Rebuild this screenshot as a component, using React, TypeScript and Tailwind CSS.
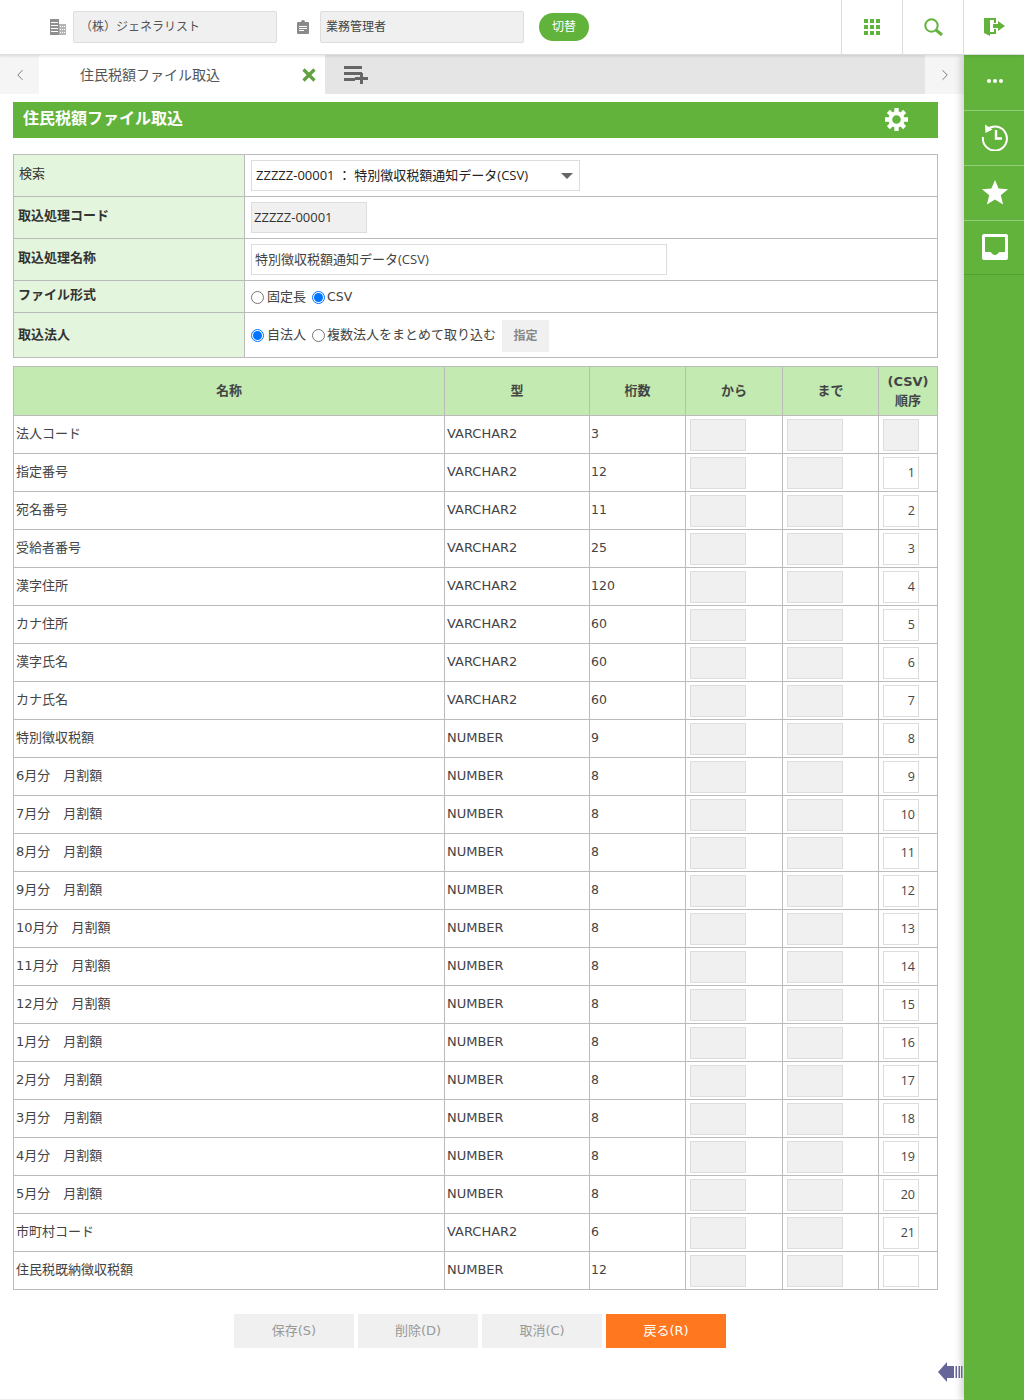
import { ChevronLeft, ChevronRight } from "lucide-react";

const FONT = "font-['Open_Sans','Noto_Sans_CJK_JP',sans-serif]";
const WIDE = "font-['DejaVu_Sans','Noto_Sans_CJK_JP',sans-serif]";

type Row = { name: string; type: string; digits: number; order?: number; locked?: boolean };

const V = "VARCHAR2";
const N = "NUMBER";

const rows: Row[] = [
  { name: "法人コード", type: V, digits: 3, locked: true },
  { name: "指定番号", type: V, digits: 12, order: 1 },
  { name: "宛名番号", type: V, digits: 11, order: 2 },
  { name: "受給者番号", type: V, digits: 25, order: 3 },
  { name: "漢字住所", type: V, digits: 120, order: 4 },
  { name: "カナ住所", type: V, digits: 60, order: 5 },
  { name: "漢字氏名", type: V, digits: 60, order: 6 },
  { name: "カナ氏名", type: V, digits: 60, order: 7 },
  { name: "特別徴収税額", type: N, digits: 9, order: 8 },
  { name: "6月分　月割額", type: N, digits: 8, order: 9 },
  { name: "7月分　月割額", type: N, digits: 8, order: 10 },
  { name: "8月分　月割額", type: N, digits: 8, order: 11 },
  { name: "9月分　月割額", type: N, digits: 8, order: 12 },
  { name: "10月分　月割額", type: N, digits: 8, order: 13 },
  { name: "11月分　月割額", type: N, digits: 8, order: 14 },
  { name: "12月分　月割額", type: N, digits: 8, order: 15 },
  { name: "1月分　月割額", type: N, digits: 8, order: 16 },
  { name: "2月分　月割額", type: N, digits: 8, order: 17 },
  { name: "3月分　月割額", type: N, digits: 8, order: 18 },
  { name: "4月分　月割額", type: N, digits: 8, order: 19 },
  { name: "5月分　月割額", type: N, digits: 8, order: 20 },
  { name: "市町村コード", type: V, digits: 6, order: 21 },
  { name: "住民税既納徴収税額", type: N, digits: 12 },
];

function Radio({ checked }: { checked?: boolean }) {
  return (
    <span className={`flex h-[13px] w-[13px] shrink-0 items-center justify-center rounded-full border bg-white ${checked ? "border-[#0075ff]" : "border-[#767676]"}`}>
      {checked && <span className="h-[9px] w-[9px] rounded-full bg-[#0075ff]" />}
    </span>
  );
}

function FormRow({ label, bold, h, pad = "pb-[4px]", children }: { label: string; bold?: boolean; h: string; pad?: string; children: React.ReactNode }) {
  return (
    <tr className={h}>
      <th className={`w-[231px] border border-[#bbbbbb] bg-[#e3f5dc] px-[4px] text-left align-middle text-[13px] text-[#333] ${pad} ${bold ? "font-bold" : "pl-[5px] font-normal"}`}>
        {label}
      </th>
      <td className="border border-[#bbbbbb] pl-[6px] align-middle text-[13px] text-[#444]">{children}</td>
    </tr>
  );
}

function Header() {
  return (
    <header className="relative z-20 flex h-[55px] items-center border-b border-[#dddddd] bg-white shadow-[0_1px_3px_rgba(0,0,0,0.12)]">
      <svg viewBox="0 0 16 16" className="ml-[50px] h-[16px] w-[16px]">
        <path fill="#8f8f8f" d="M0 0h9v16H0z" />
        <path fill="#fff" d="M1 3h7v1H1zM1 6h7v1H1zM1 9h7v1H1zM1 12h7v1H1z" />
        <path fill="#b5b5b5" d="M9 5h7v11H9z" />
        <path fill="#fff" d="M10 7h1v1h-1zM12 7h1v1h-1zM14 7h1v1h-1zM10 10h1v1h-1zM12 10h1v1h-1zM14 10h1v1h-1zM10 13h1v1h-1zM12 13h1v1h-1zM14 13h1v1h-1z" />
      </svg>
      <div className="ml-[7px] flex h-[32px] w-[204px] items-center rounded-[2px] border border-[#dddddd] bg-[#f0f0f0] pl-[6px] text-[12px] text-[#555]">（株）ジェネラリスト</div>
      <svg viewBox="0 0 12 14" className="ml-[20px] h-[14px] w-[12px]">
        <path fill="#8a8a8a" d="M1 2h3a2 2 0 0 1 4 0h3a1 1 0 0 1 1 1v10a1 1 0 0 1-1 1H1a1 1 0 0 1-1-1V3a1 1 0 0 1 1-1z" />
        <path fill="#fff" d="M2 6h8v1H2zM2 8h8v1H2zM2 10h5v1H2z" />
      </svg>
      <div className="ml-[11px] flex h-[32px] w-[204px] items-center rounded-[2px] border border-[#dddddd] bg-[#f0f0f0] pl-[5px] text-[12px] text-[#444]">業務管理者</div>
      <button className="ml-[15px] h-[28px] w-[50px] rounded-full bg-[#62b33c] text-[12px] text-white">切替</button>
      <div className="ml-auto flex h-full">
        <div className="flex h-full w-[61px] items-center justify-center border-l border-[#dddddd]">
          <svg viewBox="0 0 16 16" className="h-[16px] w-[16px]" fill="#62b33c">
            <path d="M0 0h4v4H0zM6 0h4v4H6zM12 0h4v4h-4zM0 6h4v4H0zM6 6h4v4H6zM12 6h4v4h-4zM0 12h4v4H0zM6 12h4v4H6zM12 12h4v4h-4z" />
          </svg>
        </div>
        <div className="flex h-full w-[61px] items-center justify-center border-l border-[#dddddd]">
          <svg viewBox="0 0 19 18" className="h-[18px] w-[19px]" fill="none" stroke="#62b33c">
            <circle cx="7.500" cy="7.500" r="6.200" strokeWidth="2" />
            <path d="M12 12l6 5" strokeWidth="3" />
          </svg>
        </div>
        <div className="flex h-full w-[61px] items-center justify-center border-l border-[#dddddd]">
          <svg viewBox="0 0 21 18" className="h-[18px] w-[21px]" fill="#62b33c">
            <path d="M0 0h12v5h-2V2H6v12h4v-3h2v5H6v2l-6-3z" />
            <path d="M9 6h5V3l7 5-7 5v-3H9z" />
          </svg>
        </div>
      </div>
    </header>
  );
}

function TabBar() {
  return (
    <div className="flex h-[39px]">
      <div className="flex w-[39px] items-center justify-center bg-[#f5f5f5] pl-px">
        <ChevronLeft className="h-[18px] w-[18px] text-[#777]" strokeWidth={1.3} />
      </div>
      <div className="flex w-[286px] items-center bg-white pl-[41px] text-[14px] text-[#555]">
        住民税額ファイル取込
        <svg viewBox="0 0 14 14" className="ml-auto mr-[9px] h-[14px] w-[14px]">
          <path d="M1.500 1.500l11 11M12.500 1.500l-11 11" stroke="#62a044" strokeWidth="3.200" />
        </svg>
      </div>
      <div className="flex flex-1 items-center bg-[#e5e5e5] pl-[19px]">
        <svg viewBox="0 0 24 18" className="h-[18px] w-[24px]" fill="#666">
          <path d="M0 0h18v3H0zM0 6h18v3H0zM0 12h11v3H0z" />
          <path d="M16 7h3v4h5v3h-5v4h-3v-4h-5v-3h5z" />
        </svg>
      </div>
      <div className="flex w-[39px] items-center justify-center bg-[#f5f5f5]">
        <ChevronRight className="h-[18px] w-[18px] text-[#777]" strokeWidth={1.3} />
      </div>
    </div>
  );
}

function Sidebar() {
  return (
    <aside className="relative z-10 flex w-[60px] shrink-0 flex-col bg-[#62b33c] pl-0 shadow-[-3px_0_7px_rgba(0,0,0,0.18)]">
      <div className="flex h-[56px] items-center justify-center gap-[2px] border-b border-[#93cd78] pb-[3px] pl-[2px]">
        <span className="h-[4px] w-[4px] rounded-full bg-white" />
        <span className="h-[4px] w-[4px] rounded-full bg-white" />
        <span className="h-[4px] w-[4px] rounded-full bg-white" />
      </div>
      <div className="flex h-[55px] items-center justify-center border-b border-[#93cd78] pb-[2px] pl-[2px]">
        <svg viewBox="0 0 28 28" className="h-[28px] w-[28px]" fill="none" stroke="#fff" strokeWidth="2">
          <path d="M6 6.500A12 12 0 1 1 2 14" />
          <path d="M4 1.500l0.500 8.500 7-3.500z" fill="#fff" stroke="none" />
          <path d="M15 7v8.500h6" strokeWidth="2.400" />
        </svg>
      </div>
      <div className="flex h-[55px] items-center justify-center border-b border-[#93cd78] pb-[2px] pl-[2px]">
        <svg viewBox="0 0 26 25" className="h-[25px] w-[26px]" fill="#fff">
          <path d="M13 0l3.600 8.600 9.400.7-7.200 6 2.300 9.200L13 19.500l-8.100 5 2.300-9.200-7.200-6 9.400-.7z" />
        </svg>
      </div>
      <div className="flex h-[54px] items-center justify-center border-b border-[#559c33] pb-[2px] pl-[2px]">
        <svg viewBox="0 0 26 26" className="h-[26px] w-[26px]">
          <rect width="26" height="26" rx="2" fill="#fff" />
          <path fill="#62b33c" d="M3 3h20v15h-5.500c-1 0-1.500 3-4.500 3s-3.500-3-4.500-3H3z" />
        </svg>
      </div>
    </aside>
  );
}

export default function App() {
  return (
    <div className={`relative flex h-[1400px] w-[1024px] flex-col overflow-hidden bg-white ${FONT}`}>
      <Header />
      <div className="flex flex-1">
        <main className="flex w-[964px] flex-col border-b border-[#eeeeee]">
          <TabBar />
          <div className="ml-[13px] mt-[8px] flex h-[36px] w-[925px] items-center justify-between bg-[#62b33c] pl-[10px] pr-[30px] text-[16px] font-bold text-white">
            <span className="pb-[4px]">住民税額ファイル取込</span>
            <svg viewBox="0 0 24 24" className="mt-[-1px] h-[23px] w-[23px]" fill="none">
              <circle cx="12" cy="12" r="6.500" stroke="#fff" strokeWidth="4" />
              <path stroke="#fff" strokeWidth="4.500" d="M12 0v5M12 19v5M0 12h5M19 12h5M3.500 3.500l3.500 3.500M17 17l3.500 3.500M20.500 3.500L17 7M7 17l-3.500 3.500" />
            </svg>
          </div>

          <table className="ml-[13px] mt-[16px] w-[925px] table-fixed border-collapse">
            <tbody>
              <FormRow label="検索" h="h-[42px]">
                <div className="flex h-[31px] w-[329px] items-center border border-[#dddddd] px-[4px] text-[13px] text-[#222]">
                  ZZZZZ-00001 ： 特別徴収税額通知データ(CSV)
                  <span className="ml-auto mr-[2px] h-0 w-0 border-x-[6.500px] border-t-[6px] border-x-transparent border-t-[#666]" />
                </div>
              </FormRow>
              <FormRow label="取込処理コード" bold h="h-[42px]">
                <div className="flex h-[31px] w-[116px] items-center border border-[#dddddd] bg-[#f0f0f0] pl-[2px] text-[13px] text-[#333]">ZZZZZ-00001</div>
              </FormRow>
              <FormRow label="取込処理名称" bold h="h-[42px]">
                <div className="flex h-[31px] w-[416px] items-center border border-[#dddddd] pl-[3px] text-[13px] text-[#444]">特別徴収税額通知データ(CSV)</div>
              </FormRow>
              <FormRow label="ファイル形式" bold h="h-[32px]" pad="pb-[3px]">
                <div className="flex items-center pt-px">
                  <Radio />
                  <span className="ml-[3px] mr-[6px]">固定長</span>
                  <Radio checked />
                  <span className={`ml-[2px] text-[12.500px] ${WIDE}`}>CSV</span>
                </div>
              </FormRow>
              <FormRow label="取込法人" bold h="h-[45px]" pad="pb-[1px]">
                <div className="flex items-center">
                  <Radio checked />
                  <span className="ml-[3px] mr-[6px]">自法人</span>
                  <Radio />
                  <span className="ml-[2px]">複数法人をまとめて取り込む</span>
                  <span className="ml-[6px] mt-px flex h-[32px] w-[47px] items-center justify-center bg-[#f0f0f0] text-[12px] font-bold text-[#888]">指定</span>
                </div>
              </FormRow>
            </tbody>
          </table>

          <table className="ml-[13px] mt-[8px] w-[925px] table-fixed border-collapse text-[13px] text-[#444]">
            <colgroup>
              <col className="w-[431px]" />
              <col className="w-[145px]" />
              <col className="w-[96px]" />
              <col className="w-[97px]" />
              <col className="w-[96px]" />
              <col />
            </colgroup>
            <thead>
              <tr className="h-[49px] bg-[#c2eab1] text-[13px] font-bold text-[#444]">
                <th className="border border-[#bbbbbb]">名称</th>
                <th className="border border-[#bbbbbb]">型</th>
                <th className="border border-[#bbbbbb]">桁数</th>
                <th className="border border-[#bbbbbb]">から</th>
                <th className="border border-[#bbbbbb]">まで</th>
                <th className={`border border-[#bbbbbb] leading-[19px] ${WIDE}`}>(CSV)<br />順序</th>
              </tr>
            </thead>
            <tbody>
              {rows.map((r) => (
                <tr key={r.name} className="h-[38px]">
                  <td className={`border border-[#bbbbbb] pb-[2px] pl-[2px] ${WIDE}`}>{r.name}</td>
                  <td className={`border border-[#bbbbbb] pb-[1px] pl-[2px] text-[13px] ${WIDE}`}>{r.type}</td>
                  <td className={`border border-[#bbbbbb] pb-[1px] pl-[1px] text-[12.500px] ${WIDE}`}>{r.digits}</td>
                  <td className="border border-[#bbbbbb] pl-[4px]">
                    <div className="h-[32px] w-[56px] border border-[#dddddd] bg-[#f0f0f0]" />
                  </td>
                  <td className="border border-[#bbbbbb] pl-[4px]">
                    <div className="h-[32px] w-[56px] border border-[#dddddd] bg-[#f0f0f0]" />
                  </td>
                  <td className="border border-[#bbbbbb] pl-[4px]">
                    <div className={`flex h-[32px] w-[36px] items-center justify-end border border-[#dddddd] pr-[3px] pt-px text-[12.500px] ${r.locked ? "bg-[#f0f0f0]" : "bg-white"}`}>
                      {r.order}
                    </div>
                  </td>
                </tr>
              ))}
            </tbody>
          </table>

          <div className={`ml-[234px] mt-[24px] flex gap-[4px] text-[13px] ${WIDE}`}>
            <button className="h-[34px] w-[120px] bg-[#f0f0f0] text-[#999]">保存(S)</button>
            <button className="h-[34px] w-[120px] bg-[#f0f0f0] text-[#999]">削除(D)</button>
            <button className="h-[34px] w-[120px] bg-[#f0f0f0] text-[#999]">取消(C)</button>
            <button className="h-[34px] w-[120px] bg-[#ff781f] text-white">戻る(R)</button>
          </div>
        </main>
        <Sidebar />
      </div>
      <svg viewBox="0 0 25 20" className="absolute left-[938px] top-[1362px] z-20 h-[20px] w-[25px]">
        <path fill="#666699" d="M0 10L9 0v4h7v12H9v4z" />
        <path fill="#666699" d="M17.500 4h1.500v12h-1.500zM20.500 4h1.500v12h-1.500zM23 4h1.500v12H23z" />
      </svg>
    </div>
  );
}
